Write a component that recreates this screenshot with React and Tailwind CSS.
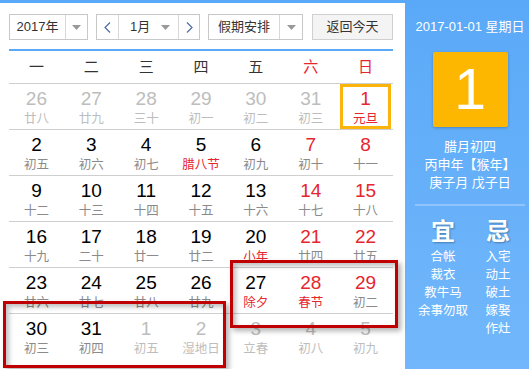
import React from "react";

const FONT = { fontFamily: '"Liberation Sans", Arial, "Noto Sans CJK SC", sans-serif' };

const rows = [
  [
    { n: 26, l: "廿八", dim: true },
    { n: 27, l: "廿九", dim: true },
    { n: 28, l: "三十", dim: true },
    { n: 29, l: "初一", dim: true },
    { n: 30, l: "初二", dim: true },
    { n: 31, l: "初三", dim: true },
    { n: 1, l: "元旦", red: true, fest: true, today: true },
  ],
  [
    { n: 2, l: "初五" },
    { n: 3, l: "初六" },
    { n: 4, l: "初七" },
    { n: 5, l: "腊八节", fest: true },
    { n: 6, l: "初九" },
    { n: 7, l: "初十", red: true },
    { n: 8, l: "十一", red: true },
  ],
  [
    { n: 9, l: "十二" },
    { n: 10, l: "十三" },
    { n: 11, l: "十四" },
    { n: 12, l: "十五" },
    { n: 13, l: "十六" },
    { n: 14, l: "十七", red: true },
    { n: 15, l: "十八", red: true },
  ],
  [
    { n: 16, l: "十九" },
    { n: 17, l: "二十" },
    { n: 18, l: "廿一" },
    { n: 19, l: "廿二" },
    { n: 20, l: "小年", fest: true },
    { n: 21, l: "廿四", red: true },
    { n: 22, l: "廿五", red: true },
  ],
  [
    { n: 23, l: "廿六" },
    { n: 24, l: "廿七" },
    { n: 25, l: "廿八" },
    { n: 26, l: "廿九" },
    { n: 27, l: "除夕", fest: true },
    { n: 28, l: "春节", red: true, fest: true },
    { n: 29, l: "初二", red: true },
  ],
  [
    { n: 30, l: "初三" },
    { n: 31, l: "初四" },
    { n: 1, l: "初五", dim: true },
    { n: 2, l: "湿地日", dim: true },
    { n: 3, l: "立春", dim: true },
    { n: 4, l: "初八", dim: true },
    { n: 5, l: "初九", dim: true },
  ],
];

const weekdays = ["一", "二", "三", "四", "五", "六", "日"];

function Arrow() {
  return (
    <svg width="9" height="5" viewBox="0 0 9 5">
      <path d="M0 0 H9 L4.5 5 Z" fill="#999" />
    </svg>
  );
}

function Chevron({ dir }) {
  return (
    <svg width="7" height="11" viewBox="0 0 7 11">
      <path
        d={dir === "left" ? "M6 0.5 L1 5.5 L6 10.5" : "M1 0.5 L6 5.5 L1 10.5"}
        fill="none"
        stroke="#4d6e9e"
        strokeWidth="1.2"
      />
    </svg>
  );
}

function Cell({ d }) {
  const numColor = d.dim ? "text-[#bdbdbd]" : d.red ? "text-[#e6262e]" : "text-black";
  const lunColor = d.dim ? "text-[#bdbdbd]" : d.fest ? "text-[#e6262e]" : "text-[#8a8a8a]";
  return (
    <div className="flex-1 h-[45px] flex items-stretch justify-center">
      <div
        className={`flex flex-col items-center w-[51px] ${
          d.today ? "border-[3px] border-[#fbb40c] pt-[1px]" : "pt-[4px]"
        }`}
      >
        <div className={`text-[19px] leading-[22px] ${numColor}`}>{d.n}</div>
        <div className={`text-[12.5px] leading-[18px] ${lunColor}`}>{d.l}</div>
      </div>
    </div>
  );
}

export default function App() {
  return (
    <div className="relative w-[529px] h-[369px] flex bg-white overflow-hidden" style={FONT}>
      {/* Left calendar */}
      <div className="w-[405px] h-full border-t-[3px] border-[#5aa9f8] pl-[9px] pr-[12px] pt-[11px]">
        {/* toolbar */}
        <div className="flex h-[26px] text-[13px] text-[#333]">
          <div className="w-[79px] flex border border-[#c8c8c8]">
            <div className="w-[55px] flex items-center justify-center">2017年</div>
            <div className="flex-1 border-l border-[#d8d8d8] flex items-center justify-center">
              <Arrow />
            </div>
          </div>
          <div className="ml-[8px] w-[104px] flex border border-[#c8c8c8]">
            <div className="w-[22px] border-r border-[#d8d8d8] flex items-center justify-center">
              <Chevron dir="left" />
            </div>
            <div className="w-[59px] flex items-center">
              <span className="ml-[11px]">1月</span>
              <span className="ml-auto mr-[8px] flex"><Arrow /></span>
            </div>
            <div className="flex-1 border-l border-[#d8d8d8] flex items-center justify-center">
              <Chevron dir="right" />
            </div>
          </div>
          <div className="ml-[8px] w-[95px] flex border border-[#c8c8c8]">
            <div className="w-[70px] flex items-center justify-center">假期安排</div>
            <div className="flex-1 border-l border-[#d8d8d8] flex items-center justify-center">
              <Arrow />
            </div>
          </div>
          <div className="ml-[9px] w-[81px] bg-[#f4f4f4] border border-[#d0d0d0] flex items-center justify-center">
            返回今天
          </div>
        </div>
        {/* blue line */}
        <div className="mt-[9px] h-[2px] bg-[#5aa9f8]" />
        {/* weekdays */}
        <div className="flex h-[33px] border-b border-[#cfcfcf] text-[15px]">
          {weekdays.map((w, i) => (
            <div
              key={w}
              className={`flex-1 flex items-center justify-center ${i >= 5 ? "text-[#e6262e]" : "text-[#333]"}`}
            >
              {w}
            </div>
          ))}
        </div>
        {rows.map((r, ri) => (
          <div key={ri} className={`flex ${ri < 5 ? "border-b border-[#cfcfcf]" : ""}`}>
            {r.map((d, i) => (
              <Cell key={i} d={d} />
            ))}
          </div>
        ))}
      </div>

      {/* Right panel */}
      <div className="flex-1 h-full pl-[6px] bg-gradient-to-b from-[#5aa9f8] to-[#72b7fb] flex flex-col items-center text-white">
        <div className="mt-[19px] text-[13px] leading-[16px]">2017-01-01 星期日</div>
        <div className="mt-[17px] w-[75px] h-[75px] bg-[#fdb700] rounded-[2px] shadow-[0_1px_3px_rgba(0,0,0,0.25)] flex items-center justify-center text-[57px] leading-none">
          1
        </div>
        <div className="mt-[11px] text-[13px] leading-[18px] flex flex-col items-center">
          <div>腊月初四</div>
          <div>丙申年【猴年】</div>
          <div>庚子月 戊子日</div>
        </div>
        <div className="mt-[12px] w-[110px] h-[2px] bg-[#8fc5fc]" />
        <div className="mt-[12px] w-full flex gap-[12px] pl-[4px]">
          <div className="w-[56px] flex flex-col items-center">
            <div className="text-[24px] leading-[28px] font-bold [text-shadow:1px_1px_2px_rgba(0,0,0,0.3)]">宜</div>
            <div className="mt-[2px] text-[12.5px] leading-[18px] flex flex-col items-center">
              <div>合帐</div>
              <div>裁衣</div>
              <div>教牛马</div>
              <div>余事勿取</div>
            </div>
          </div>
          <div className="w-[30px] flex flex-col items-center">
            <div className="text-[24px] leading-[28px] font-bold [text-shadow:1px_1px_2px_rgba(0,0,0,0.3)]">忌</div>
            <div className="mt-[2px] text-[12.5px] leading-[18px] flex flex-col items-center">
              <div>入宅</div>
              <div>动土</div>
              <div>破土</div>
              <div>嫁娶</div>
              <div>作灶</div>
            </div>
          </div>
        </div>
      </div>

      {/* annotation boxes */}
      <div className="absolute left-[3px] top-[301px] w-[223px] h-[67px] border-[3px] border-[#c00000] shadow-[3px_3px_5px_rgba(0,0,0,0.3),inset_3px_3px_5px_rgba(0,0,0,0.25)]" />
      <div className="absolute left-[230px] top-[260px] w-[168px] h-[68px] border-[3px] border-[#c00000] shadow-[3px_3px_5px_rgba(0,0,0,0.3),inset_3px_3px_5px_rgba(0,0,0,0.25)]" />
    </div>
  );
}
